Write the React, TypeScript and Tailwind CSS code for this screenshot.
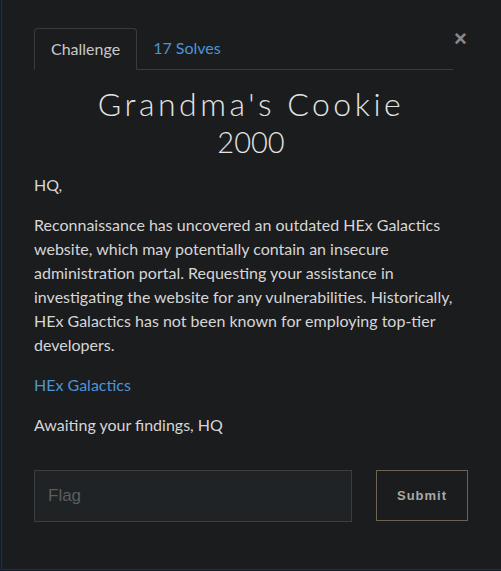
export default function App() {
  return (
    <div className="h-[571px] w-[501px] overflow-hidden bg-[#0e1c2b]">
      <div
        className="ml-[1px] h-[570px] border-b border-l border-[#2c2d2f] bg-[#1b1c1e] pl-[32px] pr-[33px] pt-[28px]"
        style={{ fontFamily: "Lato, 'Open Sans', sans-serif" }}
      >
        {/* header: tabs + close */}
        <div className="flex items-start">
          <div className="flex w-[419px] border-b border-[#3a3b3d]">
            <div className="-mb-px rounded-t border border-b-[#1b1c1e] border-[#3a3b3d] bg-[#1b1c1e] px-4 py-[8px] text-base leading-6 text-[#c9c9c9]">
              Challenge
            </div>
            <div className="px-4 py-[8px] text-base leading-6 text-[#4d94d6]">17 Solves</div>
          </div>
          <button className="ml-[1px] mt-[1px] text-[22px] font-bold leading-5 text-[#8a8a8a]" style={{ fontFamily: "'Liberation Sans', Arial, sans-serif" }}>
            ×
          </button>
        </div>

        <div className="pt-[14px] text-center text-[#e4e4e4]">
          <h1 className="text-[32px] font-light leading-[40px] tracking-[3.5px]">Grandma's Cookie</h1>
          <h2 className="text-[29px] font-light leading-[36px]">2000</h2>
        </div>

        <div className="mt-[13px] space-y-4 text-base leading-6 text-[#d6d6d6]">
          <p>HQ,</p>
          <p>
            Reconnaissance has uncovered an outdated HEx Galactics website, which may potentially contain an
            insecure administration portal. Requesting your assistance in investigating the website for any
            vulnerabilities. Historically, HEx Galactics has not been known for employing top-tier developers.
          </p>
          <p>
            <a className="text-[#4d94d6]">HEx Galactics</a>
          </p>
          <p>Awaiting your findings, HQ</p>
        </div>

        <div className="mt-[33px] flex items-start gap-6">
          <input
            placeholder="Flag"
            className="h-[52px] w-[318px] border border-[#3c3e3f] bg-[#202326] px-[13px] text-[17px] text-[#ccc] outline-none placeholder:text-[#5d5d5d]"
            style={{ fontFamily: "'Liberation Sans', Arial, sans-serif" }}
          />
          <button
            className="h-[51px] w-[92px] border border-[#6e6352] text-[13px] font-bold tracking-[1px] text-[#a9a9a9]"
            style={{ fontFamily: "'Liberation Sans', Arial, sans-serif" }}
          >
            Submit
          </button>
        </div>
      </div>
    </div>
  );
}
